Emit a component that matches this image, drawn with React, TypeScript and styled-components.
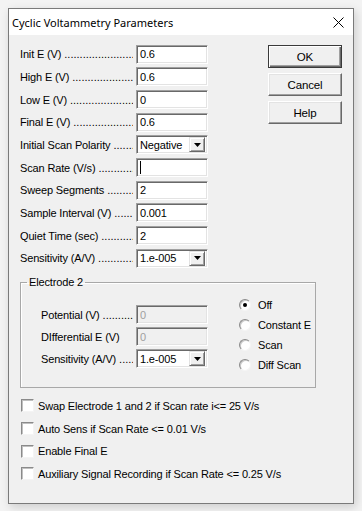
import React from 'react';
import styled, { createGlobalStyle } from 'styled-components';

const GlobalStyle = createGlobalStyle`
  html, body {
    margin: 0;
    padding: 0;
    background: #f3f3f3;
  }
  body {
    padding: 8px;
    width: 362px;
    height: 511px;
    box-sizing: border-box;
    overflow: hidden;
  }
`;

const Window = styled.div`
  width: 346px;
  height: 496px;
  box-sizing: border-box;
  border: 1px solid #7a7a7a;
  background: #f0f0f0;
  box-shadow: 2px 3px 9px rgba(0, 0, 0, 0.16);
  display: flex;
  flex-direction: column;
  font-family: 'Liberation Sans', Arial, sans-serif;
  font-size: 11px;
  letter-spacing: -0.15px;
  color: #000;
`;

const TitleBar = styled.div`
  height: 26px;
  flex: none;
  background: #fff;
  display: flex;
  align-items: center;
  justify-content: space-between;
  padding: 0 9px 0 3px;
`;

const TitleText = styled.span`
  font-family: 'Noto Sans', 'Open Sans', sans-serif;
  font-size: 11px;
  letter-spacing: 0;
  color: #000;
`;

const Body = styled.div`
  padding: 8px 11px 0 11px;
  display: flex;
  flex-direction: column;
`;

const TopSection = styled.div`
  display: flex;
  justify-content: space-between;
`;

const Fields = styled.div`
  display: flex;
  flex-direction: column;
`;

const Row = styled.div<{ $height?: number }>`
  display: flex;
  align-items: center;
  height: ${(p) => p.$height ?? 22.67}px;
`;

const Label = styled.div<{ $width: number }>`
  width: ${(p) => p.$width}px;
  display: flex;
  white-space: nowrap;
  overflow: hidden;
  padding-right: 3px;
  box-sizing: border-box;
`;

const Leader = styled.span`
  flex: 1;
  overflow: hidden;
  margin-left: 3px;
  letter-spacing: 0;
  &::after {
    content: '..............................................................';
  }
`;

const Edit = styled.div<{ $disabled?: boolean }>`
  width: 72px;
  height: 19px;
  box-sizing: border-box;
  border-top: 1px solid #a0a0a0;
  border-left: 1px solid #a0a0a0;
  border-right: 1px solid #fff;
  border-bottom: 1px solid #fff;
  box-shadow: inset 1px 1px 0 #696969, inset -1px -1px 0 #e3e3e3;
  background: ${(p) => (p.$disabled ? '#f0f0f0' : '#fff')};
  color: ${(p) => (p.$disabled ? '#a0a0a0' : '#000')};
  display: flex;
  align-items: center;
  padding-left: 3px;
  white-space: nowrap;
`;

const Caret = styled.span`
  width: 1px;
  height: 13px;
  background: #000;
`;

const ComboBox = styled(Edit)`
  padding-right: 2px;
  justify-content: space-between;
`;

const DropButton = styled.div`
  width: 16px;
  height: 15px;
  box-sizing: border-box;
  background: #f0f0f0;
  border-top: 1px solid #e3e3e3;
  border-left: 1px solid #e3e3e3;
  border-right: 1px solid #696969;
  border-bottom: 1px solid #696969;
  box-shadow: inset 1px 1px 0 #fff, inset -1px -1px 0 #a0a0a0;
  display: flex;
  align-items: center;
  justify-content: center;
`;

const Buttons = styled.div`
  display: flex;
  flex-direction: column;
  gap: 5px;
  padding-top: 2px;
`;

const PushButton = styled.div<{ $default?: boolean }>`
  width: 74px;
  height: 23px;
  box-sizing: border-box;
  background: #f0f0f0;
  display: flex;
  align-items: center;
  justify-content: center;
  font-size: 11.5px;
  border: 1px solid;
  border-color: ${(p) =>
    p.$default ? '#3a3a3a' : '#fff #696969 #696969 #fff'};
  box-shadow: ${(p) =>
    p.$default
      ? 'inset 1px 1px 0 #fff, inset -1px -1px 0 #696969, inset -2px -2px 0 #a0a0a0'
      : 'inset -1px -1px 0 #a0a0a0, inset 1px 1px 0 #e3e3e3'};
`;

const Group = styled.fieldset`
  margin: 6px 0 0 0;
  padding: 0;
  width: 296px;
  height: 112px;
  box-sizing: border-box;
  border: 1px solid #a8a8a8;
  box-shadow: inset 1px 1px 0 #fff;
  display: flex;
  align-items: flex-start;
`;

const Legend = styled.legend`
  margin-left: 6px;
  padding: 0 2px;
  line-height: 13px;
`;

const GroupFields = styled.div`
  display: flex;
  flex-direction: column;
  padding: 15px 0 0 20px;
`;

const Radios = styled.div`
  display: flex;
  flex-direction: column;
  padding: 6px 0 0 31px;
`;

const RadioRow = styled.div`
  display: flex;
  align-items: center;
  height: 20px;
  gap: 7px;
`;

const RadioCircle = styled.span<{ $checked?: boolean }>`
  width: 12px;
  height: 12px;
  box-sizing: border-box;
  border-radius: 50%;
  border: 1px solid;
  border-color: #8a8a8a #f4f4f4 #f4f4f4 #8a8a8a;
  background: #fff;
  box-shadow: inset 1px 1px 0 #c8c8c8;
  display: flex;
  align-items: center;
  justify-content: center;
  &::after {
    content: '';
    width: 4px;
    height: 4px;
    border-radius: 50%;
    background: ${(p) => (p.$checked ? '#000' : 'transparent')};
  }
`;

const Checks = styled.div`
  display: flex;
  flex-direction: column;
  margin-top: 7px;
`;

const CheckRow = styled.div`
  display: flex;
  align-items: center;
  height: 22.67px;
  gap: 4px;
  padding-left: 1px;
`;

const CheckBox = styled.span`
  width: 13px;
  height: 13px;
  box-sizing: border-box;
  background: #fff;
  border: 1px solid;
  border-color: #8a8a8a #f4f4f4 #f4f4f4 #8a8a8a;
  box-shadow: inset 1px 1px 0 #c0c0c0;
`;

type FieldDef = {
  label: string;
  kind: 'edit' | 'combo' | 'caret';
  value?: string;
  leader?: boolean;
  disabled?: boolean;
};

const mainFields: FieldDef[] = [
  { label: 'Init E (V)', kind: 'edit', value: '0.6', leader: true },
  { label: 'High E (V)', kind: 'edit', value: '0.6', leader: true },
  { label: 'Low E (V)', kind: 'edit', value: '0', leader: true },
  { label: 'Final E (V)', kind: 'edit', value: '0.6', leader: true },
  { label: 'Initial Scan Polarity', kind: 'combo', value: 'Negative', leader: true },
  { label: 'Scan Rate (V/s)', kind: 'caret', leader: true },
  { label: 'Sweep Segments', kind: 'edit', value: '2', leader: true },
  { label: 'Sample Interval (V)', kind: 'edit', value: '0.001', leader: true },
  { label: 'Quiet Time (sec)', kind: 'edit', value: '2', leader: true },
  { label: 'Sensitivity (A/V)', kind: 'combo', value: '1.e-005', leader: true },
];

const electrodeFields: FieldDef[] = [
  { label: 'Potential (V)', kind: 'edit', value: '0', leader: true, disabled: true },
  { label: 'DIfferential E (V)', kind: 'edit', value: '0', disabled: true },
  { label: 'Sensitivity (A/V)', kind: 'combo', value: '1.e-005', leader: true },
];

const radios = ['Off', 'Constant E', 'Scan', 'Diff Scan'];

const checks = [
  'Swap Electrode 1 and 2 if Scan rate i<= 25 V/s',
  'Auto Sens if Scan Rate <= 0.01 V/s',
  'Enable Final E',
  'Auxiliary Signal Recording if Scan Rate <= 0.25 V/s',
];

const Arrow = () => (
  <svg width="7" height="4" viewBox="0 0 7 4">
    <path d="M0 0h7L3.5 4z" fill="#000" />
  </svg>
);

const CloseIcon = () => (
  <svg width="11" height="11" viewBox="0 0 11 11">
    <path d="M0.5 0.5l10 10M10.5 0.5l-10 10" stroke="#000" strokeWidth="1" />
  </svg>
);

const FieldControl = ({ field }: { field: FieldDef }) => {
  if (field.kind === 'combo') {
    return (
      <ComboBox>
        <span>{field.value}</span>
        <DropButton>
          <Arrow />
        </DropButton>
      </ComboBox>
    );
  }
  if (field.kind === 'caret') {
    return (
      <Edit>
        <Caret />
      </Edit>
    );
  }
  return <Edit $disabled={field.disabled}>{field.value}</Edit>;
};

const FieldRow = ({
  field,
  labelWidth,
  height,
}: {
  field: FieldDef;
  labelWidth: number;
  height?: number;
}) => (
  <Row $height={height}>
    <Label $width={labelWidth}>
      <span>{field.label}</span>
      {field.leader && <Leader />}
    </Label>
    <FieldControl field={field} />
  </Row>
);

export default function App() {
  return (
    <>
      <GlobalStyle />
      <Window>
        <TitleBar>
          <TitleText>Cyclic Voltammetry Parameters</TitleText>
          <CloseIcon />
        </TitleBar>
        <Body>
          <TopSection>
            <Fields>
              {mainFields.map((f) => (
                <FieldRow key={f.label} field={f} labelWidth={116} />
              ))}
            </Fields>
            <Buttons>
              <PushButton $default>OK</PushButton>
              <PushButton>Cancel</PushButton>
              <PushButton>Help</PushButton>
            </Buttons>
          </TopSection>

          <Group>
            <Legend>Electrode 2</Legend>
            <GroupFields>
              {electrodeFields.map((f) => (
                <FieldRow key={f.label} field={f} labelWidth={95} height={22} />
              ))}
            </GroupFields>
            <Radios>
              {radios.map((r, i) => (
                <RadioRow key={r}>
                  <RadioCircle $checked={i === 0} />
                  <span>{r}</span>
                </RadioRow>
              ))}
            </Radios>
          </Group>

          <Checks>
            {checks.map((c) => (
              <CheckRow key={c}>
                <CheckBox />
                <span>{c}</span>
              </CheckRow>
            ))}
          </Checks>
        </Body>
      </Window>
    </>
  );
}
